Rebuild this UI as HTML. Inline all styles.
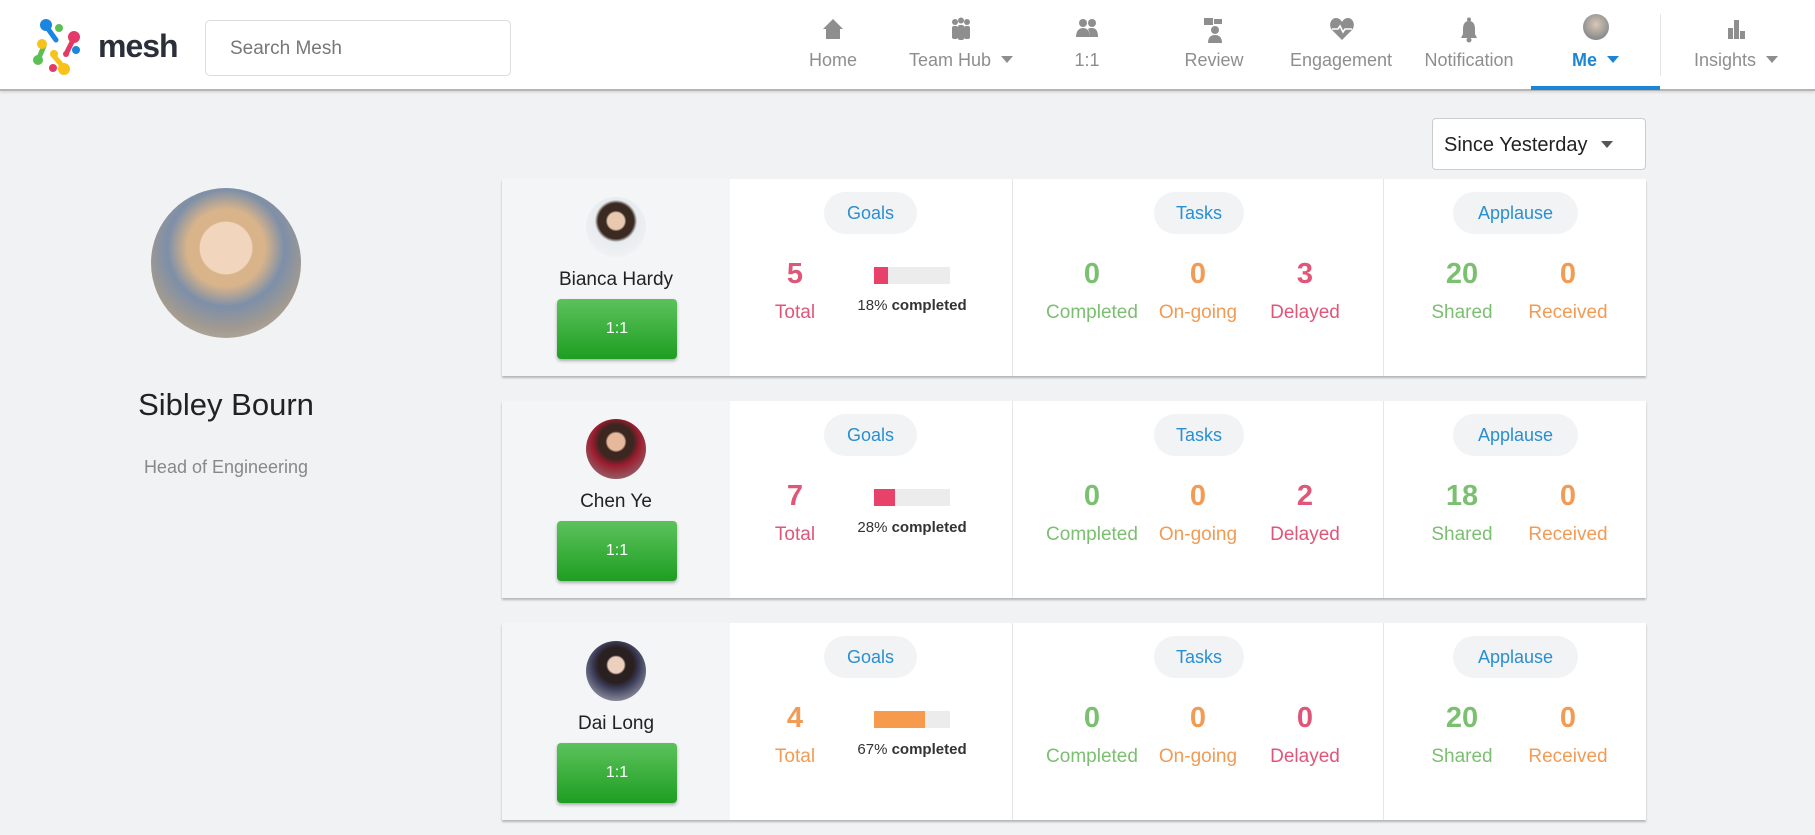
<!DOCTYPE html>
<html><head><meta charset="utf-8"><style>
*{box-sizing:border-box;margin:0;padding:0}
body{width:1815px;height:835px;overflow:hidden;background:#f1f2f4;font-family:"Liberation Sans",sans-serif;position:relative}
.hdr{position:absolute;left:0;top:0;width:1815px;height:91px;background:#fff;border-bottom:2px solid #b5b5b5;box-shadow:0 1px 3px rgba(0,0,0,.15)}
.abs{position:absolute}
.search{left:205px;top:20px;width:306px;height:56px;border:1px solid #dcdcdc;border-radius:5px;color:#777;font-size:19px;padding:17px 24px}
.nav{position:absolute;top:0;height:91px;text-align:center;color:#8e8e8e;font-size:18px}
.nav .lb{position:absolute;top:50px;left:0;width:100%;white-space:nowrap}
.nav svg{position:absolute;top:17px;left:50%;margin-left:-12px}
.caret{display:inline-block;width:0;height:0;border-left:6px solid transparent;border-right:6px solid transparent;border-top:7px solid #8e8e8e;margin-left:10px;vertical-align:3px}
.card{position:absolute;left:502px;width:1144px;height:197px;background:#fff;box-shadow:0 2px 2px rgba(0,0,0,.25)}
.lft{position:absolute;left:0;top:0;width:228px;height:197px;background:#f4f5f7}
.div{position:absolute;top:0;width:1px;height:197px;background:#e6e6e6}
.av{position:absolute;left:84px;top:18px;width:60px;height:60px;border-radius:50%}
.nm{position:absolute;left:0;width:228px;top:90px;text-align:center;font-size:19px;color:#222}
.btn{position:absolute;left:55px;top:120px;width:120px;height:60px;border-radius:4px;background:linear-gradient(#5cc25c,#1e9e22);color:#fff;text-align:center;line-height:60px;font-size:16px;box-shadow:0 2px 3px rgba(0,0,0,.3)}
.pill{position:absolute;top:13px;height:42px;border-radius:21px;background:#f2f3f5;color:#2a8fd0;font-size:18px;text-align:center;line-height:42px}
.num{position:absolute;top:79px;width:130px;margin-left:-65px;text-align:center;font-size:29px;font-weight:bold}
.lab{position:absolute;top:123px;width:130px;margin-left:-65px;text-align:center;font-size:19px}
.g{color:#7bbf70}.o{color:#f29b55}.p{color:#e05678}
.bar{position:absolute;left:372px;top:88px;width:76px;height:17px;background:#ececec}
.bar i{display:block;height:17px}
.cmp{position:absolute;left:330px;width:160px;top:118px;text-align:center;font-size:15px;color:#333}
</style></head><body>
<div class="hdr">
 <svg class="abs" style="left:30px;top:16px" width="62" height="62" viewBox="0 0 62 62">
  <g stroke-width="5" stroke-linecap="round">
   <line x1="16" y1="10" x2="26" y2="24" stroke="#1b86e0"/>
   <line x1="44" y1="22" x2="36" y2="38" stroke="#e43a67"/>
   <line x1="14" y1="30" x2="8" y2="44" stroke="#5cbf54"/>
   <line x1="24" y1="40" x2="34" y2="52" stroke="#f7c21b"/>
  </g>
  <circle cx="16" cy="9" r="6" fill="#1b86e0"/><circle cx="29" cy="12" r="4" fill="#5cbf54"/>
  <circle cx="44" cy="21" r="6" fill="#e43a67"/><circle cx="46" cy="34" r="4" fill="#1b86e0"/>
  <circle cx="12" cy="28" r="5" fill="#f7c21b"/><circle cx="8" cy="44" r="5" fill="#5cbf54"/>
  <circle cx="24" cy="38" r="4" fill="#f7c21b"/><circle cx="34" cy="53" r="6" fill="#f7c21b"/>
  <circle cx="23" cy="52" r="4" fill="#e43a67"/><circle cx="36" cy="38" r="3" fill="#e43a67"/>
 </svg>
 <div class="abs" style="left:98px;top:28px;font-size:32px;font-weight:bold;color:#2b2f3a;letter-spacing:-1px">mesh</div>
 <div class="abs search">Search Mesh</div>
 <div class="nav" style="left:793px;width:80px"><svg width="24" height="24" viewBox="0 0 24 24"><path d="M12 2L2 12h3v10h14V12h3z" fill="#8e8e8e"/></svg><div class="lb">Home</div></div>
 <div class="nav" style="left:896px;width:130px"><svg width="24" height="24" viewBox="0 0 24 24" fill="#8e8e8e"><circle cx="6" cy="5" r="3"/><circle cx="12" cy="3.5" r="3"/><circle cx="18" cy="5" r="3"/><rect x="3" y="9" width="6" height="13" rx="2"/><rect x="9" y="8" width="6" height="15" rx="2"/><rect x="15" y="9" width="6" height="13" rx="2"/></svg><div class="lb">Team Hub<span class="caret"></span></div></div>
 <div class="nav" style="left:1047px;width:80px"><svg width="24" height="24" viewBox="0 0 24 24" fill="#8e8e8e"><circle cx="8" cy="6" r="4"/><circle cx="17" cy="6" r="4"/><path d="M1 20c0-6 3-9 7-9s7 3 7 9z"/><path d="M15 20c0-4-1-6-2-8 1-1 3-1 4-1 4 0 6 3 6 9z"/></svg><div class="lb">1:1</div></div>
 <div class="nav" style="left:1164px;width:100px"><svg width="24" height="26" viewBox="0 0 24 26" fill="#8e8e8e"><rect x="2" y="1" width="9" height="7"/><rect x="12" y="2" width="8" height="5"/><circle cx="13" cy="13" r="4"/><path d="M6 26c0-6 3-8 7-8s7 2 7 8z"/></svg><div class="lb">Review</div></div>
 <div class="nav" style="left:1281px;width:120px"><svg width="26" height="24" viewBox="0 0 26 24"><path d="M13 23L3 13C-1 8 2 1 7 1c3 0 5 2 6 4 1-2 3-4 6-4 5 0 8 7 4 12z" fill="#8e8e8e"/><path d="M3 12h6l2-3 3 6 2-3h7" stroke="#fff" stroke-width="1.6" fill="none"/></svg><div class="lb">Engagement</div></div>
 <div class="nav" style="left:1409px;width:120px"><svg width="24" height="26" viewBox="0 0 24 26" fill="#8e8e8e"><circle cx="12" cy="2.5" r="2"/><path d="M12 4c-4 0-6 3-6 8v5l-2 4h16l-2-4v-5c0-5-2-8-6-8z"/><circle cx="12" cy="23" r="2.5"/></svg><div class="lb">Notification</div></div>
 <div class="nav" style="left:1531px;width:129px;color:#1b86d6;font-weight:bold"><div class="abs" style="left:52px;top:14px;width:26px;height:26px;border-radius:50%;background:radial-gradient(circle at 50% 40%,#d9c7b4,#6b7580)"></div><div class="lb">Me<span class="caret" style="border-top-color:#1b86d6"></span></div></div>
 <div class="abs" style="left:1531px;top:86px;width:129px;height:4px;background:#1b86d6"></div>
 <div class="abs" style="left:1660px;top:14px;width:1px;height:62px;background:#e5e5e5"></div>
 <div class="nav" style="left:1676px;width:120px"><svg width="24" height="24" viewBox="0 0 24 24" fill="#8e8e8e"><rect x="4" y="11" width="5" height="11"/><rect x="10" y="3" width="5" height="19"/><rect x="16" y="14" width="5" height="8"/></svg><div class="lb">Insights<span class="caret"></span></div></div>
</div>

<div class="abs" style="left:1432px;top:118px;width:214px;height:52px;background:#fff;border:1px solid #ccc;border-radius:4px;font-size:20px;color:#222;padding:15px 11px;white-space:nowrap">Since Yesterday<span class="caret" style="border-top-color:#555;margin-left:14px"></span></div>

<div class="abs" style="left:151px;top:188px;width:150px;height:150px;border-radius:50%;background:radial-gradient(circle at 50% 40%,#f1d6bd 0 22%,#d9b48a 23% 33%,#7d8fa8 50%,#a39a90 70%,#c8bfb4)"></div>
<div class="abs" style="left:56px;top:387px;width:340px;text-align:center;font-size:31px;color:#222">Sibley Bourn</div>
<div class="abs" style="left:56px;top:457px;width:340px;text-align:center;font-size:18px;color:#888">Head of Engineering</div>

<!-- card 1 -->
<div class="card" style="top:179px">
 <div class="lft"></div>
 <div class="av" style="background:radial-gradient(circle at 50% 40%,#e8c9b0 0 18%,#3a2a22 22% 38%,#e8ecef 45%,#f5f5f5)"></div>
 <div class="nm">Bianca Hardy</div><div class="btn">1:1</div>
 <div class="div" style="left:510px"></div><div class="div" style="left:881px"></div>
 <div class="pill" style="left:322px;width:93px">Goals</div>
 <div class="num p" style="left:293px">5</div><div class="lab p" style="left:293px">Total</div>
 <div class="bar"><i style="width:14px;background:#e8416a"></i></div><div class="cmp">18% <b>completed</b></div>
 <div class="pill" style="left:652px;width:90px">Tasks</div>
 <div class="num g" style="left:590px">0</div><div class="lab g" style="left:590px">Completed</div>
 <div class="num o" style="left:696px">0</div><div class="lab o" style="left:696px">On-going</div>
 <div class="num p" style="left:803px">3</div><div class="lab p" style="left:803px">Delayed</div>
 <div class="pill" style="left:951px;width:125px">Applause</div>
 <div class="num g" style="left:960px">20</div><div class="lab g" style="left:960px">Shared</div>
 <div class="num o" style="left:1066px">0</div><div class="lab o" style="left:1066px">Received</div>
</div>
<!-- card 2 -->
<div class="card" style="top:401px">
 <div class="lft"></div>
 <div class="av" style="background:radial-gradient(circle at 50% 38%,#e6b99c 0 18%,#3b2620 22% 36%,#9c1c2e 50%,#8f8f8f)"></div>
 <div class="nm">Chen Ye</div><div class="btn">1:1</div>
 <div class="div" style="left:510px"></div><div class="div" style="left:881px"></div>
 <div class="pill" style="left:322px;width:93px">Goals</div>
 <div class="num p" style="left:293px">7</div><div class="lab p" style="left:293px">Total</div>
 <div class="bar"><i style="width:21px;background:#e8416a"></i></div><div class="cmp">28% <b>completed</b></div>
 <div class="pill" style="left:652px;width:90px">Tasks</div>
 <div class="num g" style="left:590px">0</div><div class="lab g" style="left:590px">Completed</div>
 <div class="num o" style="left:696px">0</div><div class="lab o" style="left:696px">On-going</div>
 <div class="num p" style="left:803px">2</div><div class="lab p" style="left:803px">Delayed</div>
 <div class="pill" style="left:951px;width:125px">Applause</div>
 <div class="num g" style="left:960px">18</div><div class="lab g" style="left:960px">Shared</div>
 <div class="num o" style="left:1066px">0</div><div class="lab o" style="left:1066px">Received</div>
</div>
<!-- card 3 -->
<div class="card" style="top:623px">
 <div class="lft"></div>
 <div class="av" style="background:radial-gradient(circle at 50% 40%,#ecd0bd 0 17%,#2a2020 21% 38%,#3a3b58 50%,#c9ccd0)"></div>
 <div class="nm">Dai Long</div><div class="btn">1:1</div>
 <div class="div" style="left:510px"></div><div class="div" style="left:881px"></div>
 <div class="pill" style="left:322px;width:93px">Goals</div>
 <div class="num o" style="left:293px">4</div><div class="lab o" style="left:293px">Total</div>
 <div class="bar"><i style="width:51px;background:#f79a4c"></i></div><div class="cmp">67% <b>completed</b></div>
 <div class="pill" style="left:652px;width:90px">Tasks</div>
 <div class="num g" style="left:590px">0</div><div class="lab g" style="left:590px">Completed</div>
 <div class="num o" style="left:696px">0</div><div class="lab o" style="left:696px">On-going</div>
 <div class="num p" style="left:803px">0</div><div class="lab p" style="left:803px">Delayed</div>
 <div class="pill" style="left:951px;width:125px">Applause</div>
 <div class="num g" style="left:960px">20</div><div class="lab g" style="left:960px">Shared</div>
 <div class="num o" style="left:1066px">0</div><div class="lab o" style="left:1066px">Received</div>
</div>
</body></html>
